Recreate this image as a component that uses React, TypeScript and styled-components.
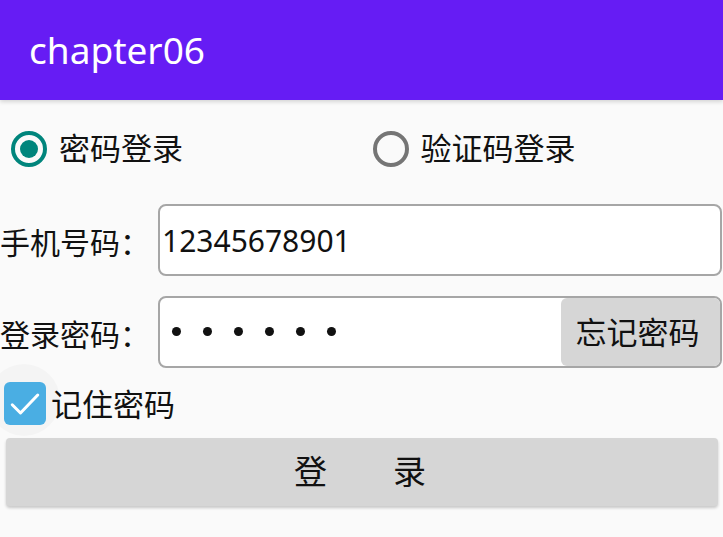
import { FC, useState } from 'react'
import styled, { createGlobalStyle } from 'styled-components'

const GlobalStyle = createGlobalStyle`
  html, body {
    margin: 0;
    padding: 0;
    background: #fafafa;
  }
  body {
    font-family: 'Noto Sans', 'Noto Sans CJK SC', sans-serif;
  }
`

const App: FC = () => {
  const [mode, setMode] = useState<'password' | 'code'>('password')
  const [remember, setRemember] = useState(true)

  return (
    <Screen>
      <GlobalStyle />
      <AppBar>
        <Title>chapter06</Title>
      </AppBar>

      <RadioGroup>
        <RadioItem onClick={() => setMode('password')}>
          <RadioCircle checked={mode === 'password'} />
          <RadioText>密码登录</RadioText>
        </RadioItem>
        <RadioItem onClick={() => setMode('code')}>
          <RadioCircle checked={mode === 'code'} />
          <RadioText>验证码登录</RadioText>
        </RadioItem>
      </RadioGroup>

      <FieldRow gap={6}>
        <FieldLabel>手机号码：</FieldLabel>
        <FieldBox>
          <FieldInput defaultValue="12345678901" />
        </FieldBox>
      </FieldRow>

      <FieldRow gap={20}>
        <FieldLabel>登录密码：</FieldLabel>
        <FieldBox>
          <PasswordDots aria-label="密码">
            {Array.from({ length: 6 }).map((_, i) => (
              <Dot key={i} />
            ))}
          </PasswordDots>
          <ForgetButton>忘记密码</ForgetButton>
        </FieldBox>
      </FieldRow>

      <RememberRow onClick={() => setRemember(!remember)}>
        <CheckWrap>
          <Ripple />
          <CheckBox checked={remember}>
            {remember && (
              <svg width="36" height="36" viewBox="0 0 24 24">
                <path d="M3.5 12.5l5.5 5.5L20.5 6" fill="none" stroke="#fff" strokeWidth="2" strokeLinecap="round" strokeLinejoin="round" />
              </svg>
            )}
          </CheckBox>
        </CheckWrap>
        <RememberText>记住密码</RememberText>
      </RememberRow>

      <LoginButton>登　　录</LoginButton>
    </Screen>
  )
}

const Screen = styled.div`
  width: 723px;
  height: 537px;
  background: #fafafa;
  overflow: hidden;
  display: flex;
  flex-direction: column;
`

const AppBar = styled.div`
  height: 100px;
  flex-shrink: 0;
  background: #661cf4;
  display: flex;
  align-items: center;
  padding-left: 29px;
  box-shadow: 0 2px 4px rgba(0, 0, 0, 0.15);
  position: relative;
  z-index: 1;
`

const Title = styled.div`
  color: #fff;
  font-family: 'Noto Sans', sans-serif;
  font-size: 37px;
  line-height: 1;
  margin-top: -1px;
`

const RadioGroup = styled.div`
  height: 98px;
  display: grid;
  grid-template-columns: 1fr 1fr;
  align-items: center;
`

const RadioItem = styled.div`
  display: flex;
  align-items: center;
  gap: 12px;
  padding-left: 11px;
  cursor: pointer;
`

const RadioCircle = styled.span<{ checked: boolean }>`
  width: 36px;
  height: 36px;
  box-sizing: border-box;
  border-radius: 50%;
  border: 4px solid ${(p) => (p.checked ? '#00857c' : '#757575')};
  display: flex;
  align-items: center;
  justify-content: center;

  &::after {
    content: '';
    display: ${(p) => (p.checked ? 'block' : 'none')};
    width: 18px;
    height: 18px;
    border-radius: 50%;
    background: #00857c;
  }
`

const RadioText = styled.span`
  font-family: 'Noto Sans CJK SC', sans-serif;
  font-size: 31px;
  color: #111;
  line-height: 1;
  margin-top: -5px;
`

const FieldRow = styled.div<{ gap: number }>`
  display: flex;
  align-items: center;
  margin-top: ${(p) => p.gap}px;
  padding-right: 1px;
`

const FieldLabel = styled.div`
  width: 158px;
  flex-shrink: 0;
  font-family: 'Noto Sans CJK SC', sans-serif;
  font-size: 30px;
  color: #111;
  line-height: 1;
  margin-top: 1px;
`

const FieldBox = styled.div`
  flex: 1;
  height: 72px;
  box-sizing: border-box;
  border: 2px solid #a6a6a6;
  border-radius: 8px;
  background: #fff;
  display: flex;
  align-items: stretch;
  overflow: hidden;
`

const FieldInput = styled.input`
  flex: 1;
  min-width: 0;
  border: none;
  outline: none;
  background: transparent;
  padding: 0 0 0 2px;
  font-family: 'Noto Sans', sans-serif;
  font-size: 30px;
  color: #111;
`

const PasswordDots = styled.div`
  flex: 1;
  display: flex;
  align-items: center;
  gap: 22px;
  padding: 0 0 2px 12px;
`

const Dot = styled.span`
  width: 9px;
  height: 9px;
  border-radius: 50%;
  background: #111;
`

const ForgetButton = styled.button`
  width: 159px;
  border: none;
  border-radius: 6px 0 0 6px;
  background: #d6d6d6;
  font-family: 'Noto Sans CJK SC', sans-serif;
  font-size: 31px;
  color: #111;
  padding: 0 6px 4px 0;
  cursor: pointer;
`

const RememberRow = styled.div`
  display: flex;
  align-items: center;
  margin-top: 14px;
  height: 43px;
  padding-left: 4px;
  gap: 5px;
  cursor: pointer;
`

const CheckWrap = styled.div`
  position: relative;
  width: 42px;
  height: 43px;
`

const Ripple = styled.span`
  position: absolute;
  left: -16px;
  top: -18px;
  width: 72px;
  height: 72px;
  border-radius: 50%;
  background: rgba(0, 0, 0, 0.025);
`

const CheckBox = styled.span<{ checked: boolean }>`
  position: relative;
  display: flex;
  align-items: center;
  justify-content: center;
  width: 42px;
  height: 43px;
  box-sizing: border-box;
  border-radius: 6px;
  background: ${(p) => (p.checked ? '#4aaee3' : 'transparent')};
  border: ${(p) => (p.checked ? 'none' : '3px solid #757575')};
`

const RememberText = styled.span`
  font-family: 'Noto Sans CJK SC', sans-serif;
  font-size: 31px;
  color: #111;
  line-height: 1;
  margin-top: -3px;
`

const LoginButton = styled.button`
  margin: 13px 5px 0 6px;
  height: 68px;
  border: none;
  border-radius: 4px;
  background: #d6d6d6;
  box-shadow: 0 2px 3px rgba(0, 0, 0, 0.2);
  font-family: 'Noto Sans CJK SC', sans-serif;
  font-size: 33px;
  color: #111;
  padding: 0 4px 4px 0;
  cursor: pointer;
`

export default App
